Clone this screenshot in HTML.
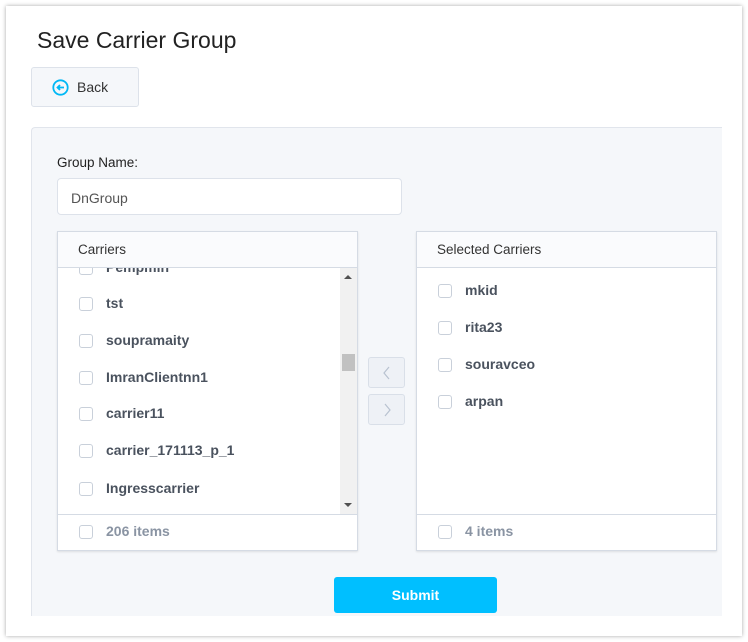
<!DOCTYPE html>
<html><head><meta charset="utf-8"><style>
*{box-sizing:border-box;margin:0;padding:0}
body{width:748px;height:642px;background:#fff;font-family:"Liberation Sans",sans-serif;position:relative;overflow:hidden}
.card{position:absolute;left:6px;top:6px;width:736px;height:630px;background:#fff;box-shadow:0 0 4px rgba(0,0,0,.35)}
.abs{position:absolute}
h1{position:absolute;left:37px;top:27px;font-size:23px;font-weight:normal;color:#222}
.back{left:31px;top:67px;width:108px;height:40px;border:1px solid #dde2ea;border-radius:3px;background:#f5f7fa;font-size:14px;color:#333}
.panel{left:31px;top:127px;width:691px;height:489px;background:#f5f7fa;border:1px solid #e1e5ec;border-right:none;border-bottom:none;border-radius:4px 0 0 0}
.lbl{left:57px;top:155px;font-size:13.5px;color:#222}
.inp{left:57px;top:178px;width:345px;height:37px;background:#fff;border:1px solid #dde2ea;border-radius:4px;font-size:14px;color:#555;padding:11px 13px}
.list{width:301px;height:320px;background:#fff;border:1px solid #d5dbe4;box-shadow:0 1px 2px rgba(0,0,0,.1)}
.hd{position:absolute;left:0;top:0;right:0;height:36px;background:#fafbfd;border-bottom:1px solid #d5dbe4;font-size:13.5px;color:#333;padding:10px 20px}
.ft{position:absolute;left:0;bottom:0;right:0;height:36px;border-top:1px solid #d5dbe4;font-size:14px;color:#8a94a3;font-weight:bold}
.ft .it{color:#8a94a3}
.it{position:absolute;left:21px;font-size:14px;color:#4a525e;font-weight:bold;height:16px;line-height:16px}
.cb{position:absolute;left:0;top:1px;width:14px;height:14px;border:1px solid #c9d0da;border-radius:3px;background:#fff}
.it span{position:absolute;left:27px;top:-1px;white-space:nowrap}
.ab{width:37px;height:31px;border:1px solid #d9dfe8;border-radius:3px;background:#eef1f6}
.sub{left:334px;top:577px;width:163px;height:36px;background:#00bfff;border-radius:3px;color:#fff;font-size:14px;font-weight:bold;text-align:center;line-height:36px}
</style></head><body>
<div class="card"></div>
<h1>Save Carrier Group</h1>
<div class="abs back"><svg class="abs" style="left:20px;top:11px" width="17" height="17" viewBox="0 0 17 17"><circle cx="8.5" cy="8.5" r="7.2" fill="none" stroke="#00b8f5" stroke-width="1.8"/><path d="M12 8.5H5.5M8 6 5.5 8.5 8 11" fill="none" stroke="#00b8f5" stroke-width="1.8"/></svg><span class="abs" style="left:45px;top:11px">Back</span></div>
<div class="abs panel"></div>
<div class="abs lbl">Group Name:</div>
<div class="abs inp">DnGroup</div>

<div class="abs list" style="left:57px;top:231px;overflow:hidden">
 <div style="position:absolute;left:0;top:36px;right:0;height:247px;overflow:hidden">
  <div class="it" style="top:-8px"><div class="cb"></div><span>Pempmin</span></div>
  <div class="it" style="top:28px"><div class="cb"></div><span>tst</span></div>
  <div class="it" style="top:65px"><div class="cb"></div><span>soupramaity</span></div>
  <div class="it" style="top:102px"><div class="cb"></div><span>ImranClientnn1</span></div>
  <div class="it" style="top:138px"><div class="cb"></div><span>carrier11</span></div>
  <div class="it" style="top:175px"><div class="cb"></div><span>carrier_171113_p_1</span></div>
  <div class="it" style="top:213px"><div class="cb"></div><span>Ingresscarrier</span></div>
  <div style="position:absolute;right:0;top:0;width:17px;height:247px;background:#f1f1f1">
   <div style="position:absolute;left:4px;top:7px;border:4px solid transparent;border-bottom:4px solid #505050;border-top:0"></div>
   <div style="position:absolute;left:2px;top:86px;width:13px;height:17px;background:#c1c1c1"></div>
   <div style="position:absolute;left:4px;top:235px;border:4px solid transparent;border-top:4px solid #505050;border-bottom:0"></div>
  </div>
 </div>
 <div class="hd">Carriers</div>
 <div class="ft"><div class="it" style="top:9px"><div class="cb"></div><span>206 items</span></div></div>
</div>

<div class="abs ab" style="left:368px;top:357px"><svg class="abs" style="left:12px;top:8px" width="12" height="14"><path d="M8 1 3 7l5 6" fill="none" stroke="#b8c2d0" stroke-width="1.2"/></svg></div>
<div class="abs ab" style="left:368px;top:394px"><svg class="abs" style="left:13px;top:8px" width="12" height="14"><path d="M3 1l5 6-5 6" fill="none" stroke="#b8c2d0" stroke-width="1.2"/></svg></div>

<div class="abs list" style="left:416px;top:231px">
 <div class="hd">Selected Carriers</div>
 <div class="it" style="top:51px"><div class="cb"></div><span>mkid</span></div>
 <div class="it" style="top:88px"><div class="cb"></div><span>rita23</span></div>
 <div class="it" style="top:125px"><div class="cb"></div><span>souravceo</span></div>
 <div class="it" style="top:162px"><div class="cb"></div><span>arpan</span></div>
 <div class="ft"><div class="it" style="top:9px"><div class="cb"></div><span>4 items</span></div></div>
</div>

<div class="abs sub">Submit</div>
</body></html>
